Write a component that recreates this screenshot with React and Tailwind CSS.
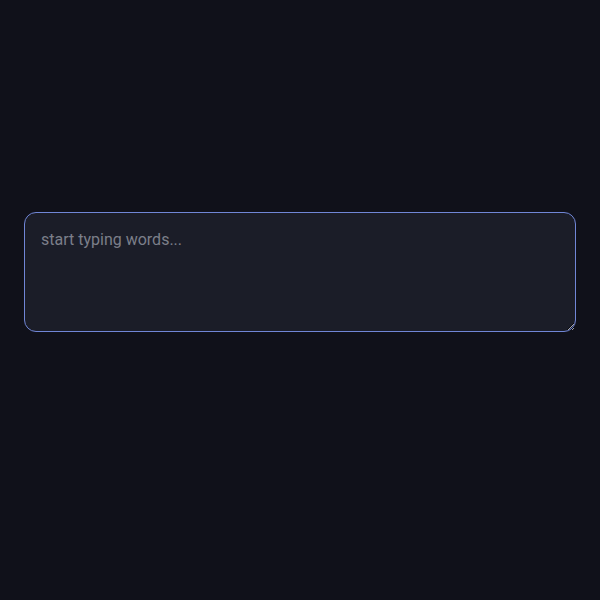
export default function App() {
  return (
    <div className="min-h-screen w-full bg-[#10111a] px-6 pt-[212px] font-['Roboto','Noto_Sans',sans-serif]">
      <textarea
        autoFocus
        placeholder="start typing words..."
        className="block h-[120px] w-full rounded-xl border border-[#7086d6] bg-[#1b1d28] px-4 pt-[15px] pb-4 font-['Roboto','Noto_Sans',sans-serif] text-base leading-6 text-gray-200 caret-gray-300 outline-none placeholder:text-[#7c7f8a]"
      />
    </div>
  );
}
